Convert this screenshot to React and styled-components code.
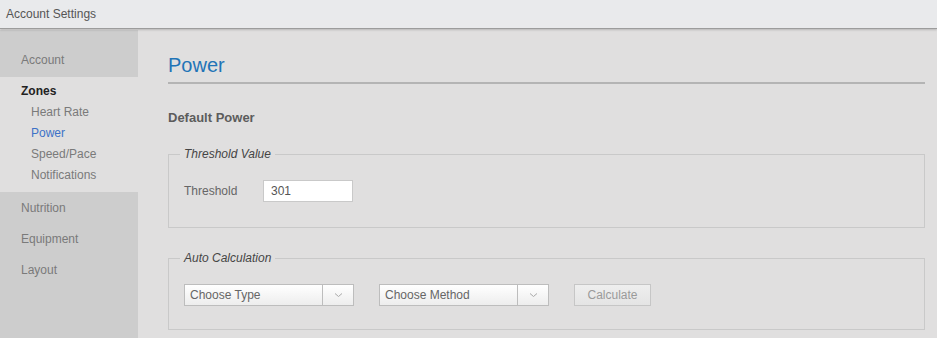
import React from 'react';
import styled, { createGlobalStyle } from 'styled-components';

const GlobalStyle = createGlobalStyle`
  html, body {
    margin: 0;
    padding: 0;
    background: #e0dfdf;
    font-family: "Liberation Sans", Arial, Helvetica, sans-serif;
  }
`;

const Page = styled.div`
  width: 937px;
  height: 338px;
  display: flex;
  flex-direction: column;
  overflow: hidden;
  background: #e0dfdf;
`;

const TopBar = styled.div`
  height: 28px;
  flex: none;
  background: #e9eaec;
  border-bottom: 1px solid #9c9c9c;
  box-shadow: 0 1px 2px rgba(0, 0, 0, 0.18);
  display: flex;
  align-items: center;
  padding-left: 6px;
  font-size: 12px;
  color: #555;
  position: relative;
  z-index: 1;
`;

const Body = styled.div`
  flex: 1;
  display: flex;
  padding-top: 1px;
`;

const Sidebar = styled.div`
  width: 138px;
  flex: none;
  display: flex;
  flex-direction: column;
`;

const Block = styled.div`
  background: ${p => (p.$active ? '#e0dfdf' : '#cdcdcd')};
  padding: ${p => p.$pad};
  flex: ${p => (p.$grow ? 1 : 'none')};
`;

const NavItem = styled.div`
  font-size: 12px;
  line-height: 15px;
  color: #7a7a7a;
  padding-left: 21px;
  margin-bottom: ${p => p.$gap || 0}px;
`;

const GroupTitle = styled.div`
  font-size: 12px;
  font-weight: bold;
  line-height: 15px;
  color: #222;
  padding-left: 21px;
  margin-bottom: 6px;
`;

const SubItem = styled.div`
  font-size: 12px;
  line-height: 15px;
  color: ${p => (p.$current ? '#3d72c7' : '#7a7a7a')};
  padding-left: 31px;
  margin-bottom: ${p => (p.$last ? 0 : 6)}px;
`;

const Main = styled.div`
  flex: 1;
  padding: 23px 12px 0 30px;
`;

const Title = styled.h1`
  margin: 0;
  font-size: 20px;
  font-weight: normal;
  color: #1f74b7;
  line-height: 24px;
  padding-bottom: 5px;
  border-bottom: 2px solid #b4b4b4;
`;

const Section = styled.h2`
  margin: 26px 0 21px;
  font-size: 13px;
  font-weight: bold;
  color: #5c5c5c;
  line-height: 16px;
`;

const Group = styled.fieldset`
  margin: 0 0 ${p => p.$gap || 0}px;
  padding: ${p => p.$pad};
  border: 1px solid #c9c9c9;
  min-width: 0;
`;

const Legend = styled.legend`
  padding: 0 4px;
  margin-left: -4px;
  font-size: 12px;
  font-style: italic;
  color: #454545;
  line-height: 14px;
`;

const Row = styled.div`
  display: flex;
  align-items: center;
`;

const Label = styled.label`
  width: 79px;
  font-size: 12px;
  color: #666;
`;

const Input = styled.input`
  box-sizing: border-box;
  width: 90px;
  height: 22px;
  border: 1px solid #c9c9c9;
  background: #fff;
  padding: 0 7px;
  font-family: inherit;
  font-size: 12px;
  color: #555;
  outline: none;
`;

const Select = styled.div`
  box-sizing: border-box;
  width: 170px;
  height: 22px;
  display: flex;
  border: 1px solid #bdbdbd;
  background: linear-gradient(#ffffff, #ededed);
  margin-right: ${p => p.$gap || 0}px;
`;

const SelectText = styled.div`
  flex: 1;
  font-size: 12px;
  color: #666;
  line-height: 20px;
  padding-left: 5px;
`;

const SelectArrow = styled.div`
  width: 30px;
  border-left: 1px solid #bdbdbd;
  display: flex;
  align-items: center;
  justify-content: center;
`;

const Button = styled.button`
  box-sizing: border-box;
  width: 77px;
  height: 22px;
  border: 1px solid #c6c6c6;
  background: linear-gradient(#eeeeee, #e4e4e4);
  font-family: inherit;
  font-size: 12px;
  color: #9a9a9a;
  padding: 0;
`;

const Chevron = () => (
  <svg width="9" height="6" viewBox="0 0 9 6">
    <path d="M1 1.5 L4.5 4.5 L8 1.5" fill="none" stroke="#aaa" strokeWidth="1" />
  </svg>
);

export default function App() {
  return (
    <Page>
      <GlobalStyle />
      <TopBar>Account Settings</TopBar>
      <Body>
        <Sidebar>
          <Block $pad="23px 0 9px">
            <NavItem>Account</NavItem>
          </Block>
          <Block $active $pad="7px 0 9px">
            <GroupTitle>Zones</GroupTitle>
            <SubItem>Heart Rate</SubItem>
            <SubItem $current>Power</SubItem>
            <SubItem>Speed/Pace</SubItem>
            <SubItem $last>Notifications</SubItem>
          </Block>
          <Block $grow $pad="9px 0 0">
            <NavItem $gap={16}>Nutrition</NavItem>
            <NavItem $gap={16}>Equipment</NavItem>
            <NavItem>Layout</NavItem>
          </Block>
        </Sidebar>
        <Main>
          <Title>Power</Title>
          <Section>Default Power</Section>
          <Group $gap={23} $pad="19px 15px 25px">
            <Legend>Threshold Value</Legend>
            <Row>
              <Label>Threshold</Label>
              <Input defaultValue="301" />
            </Row>
          </Group>
          <Group $pad="19px 15px 23px">
            <Legend>Auto Calculation</Legend>
            <Row>
              <Select $gap={25}>
                <SelectText>Choose Type</SelectText>
                <SelectArrow><Chevron /></SelectArrow>
              </Select>
              <Select $gap={25}>
                <SelectText>Choose Method</SelectText>
                <SelectArrow><Chevron /></SelectArrow>
              </Select>
              <Button>Calculate</Button>
            </Row>
          </Group>
        </Main>
      </Body>
    </Page>
  );
}
